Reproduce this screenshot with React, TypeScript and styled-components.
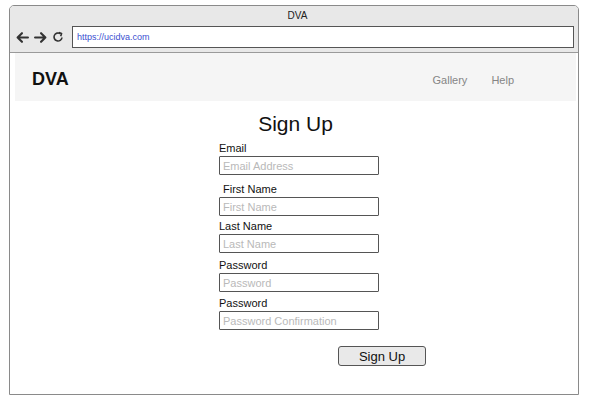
import React from "react";
import styled, { createGlobalStyle } from "styled-components";

const Global = createGlobalStyle`
  html, body { margin: 0; padding: 0; background: #ffffff; }
  body { font-family: "Liberation Sans", Arial, sans-serif; color: #111; }
`;

const Window = styled.div`
  box-sizing: border-box;
  margin: 5px 0 0 9px;
  width: 570px;
  height: 390px;
  border: 1px solid #8a8a8a;
  border-radius: 5px 5px 0 0;
  box-shadow: 0 1px 0 #b8b8b8;
  display: flex;
  flex-direction: column;
  overflow: hidden;
`;

const TitleBar = styled.div`
  background: #e8e8e8;
  height: 47px;
  border-bottom: 1px solid #9a9a9a;
  display: flex;
  flex-direction: column;
  box-sizing: border-box;
  padding: 4px 4px 0 6px;
`;

const Title = styled.div`
  text-align: center;
  font-size: 10px;
  line-height: 12px;
  color: #222;
  padding-left: 5px;
`;

const AddressRow = styled.div`
  display: flex;
  align-items: center;
  margin-top: 4px;
`;

const NavIcons = styled.div`
  display: flex;
  align-items: center;
  width: 56px;
  gap: 5px;
`;

const Address = styled.div`
  flex: 1;
  box-sizing: border-box;
  height: 22px;
  border: 1px solid #555;
  background: #fff;
  font-size: 9px;
  line-height: 20px;
  color: #3b4fd0;
  padding-left: 4px;
`;

const Content = styled.div`
  flex: 1;
  display: flex;
  flex-direction: column;
  padding: 0 2px 0 5px;
`;

const NavBar = styled.div`
  box-sizing: border-box;
  height: 48px;
  background: #f5f5f5;
  display: flex;
  align-items: center;
  padding: 5px 62px 0 17px;
`;

const Brand = styled.div`
  font-size: 18px;
  font-weight: bold;
  color: #111;
  flex: 1;
`;

const NavLinks = styled.div`
  display: flex;
  gap: 24px;
`;

const NavLink = styled.span`
  font-size: 11px;
  color: #858585;
`;

const Main = styled.div`
  display: flex;
  flex-direction: column;
`;

const Heading = styled.h1`
  margin: 11px 0 0 0;
  font-size: 21px;
  line-height: 24px;
  font-weight: normal;
  text-align: center;
  color: #111;
`;

const Form = styled.form`
  display: flex;
  flex-direction: column;
  width: 207px;
  margin: 5px 0 0 204px;
`;

const Field = styled.div<{ $space: number }>`
  display: flex;
  flex-direction: column;
  width: 160px;
  margin-top: ${(p) => p.$space}px;
`;

const Label = styled.label<{ $indent?: number }>`
  font-size: 11px;
  line-height: 14px;
  height: 14px;
  margin-bottom: 1px;
  padding-left: ${(p) => p.$indent ?? 0}px;
  color: #111;
`;

const Input = styled.input`
  box-sizing: border-box;
  width: 160px;
  height: 19px;
  border: 1px solid #555;
  border-radius: 1px;
  padding: 0 3px;
  margin: 0;
  font-family: "Liberation Sans", Arial, sans-serif;
  font-size: 11px;
  outline: none;
  background: #fff;
  &::placeholder { color: #b9b9b9; }
`;

const ButtonRow = styled.div`
  display: flex;
  justify-content: flex-end;
  margin-top: 16px;
`;

const Button = styled.button`
  box-sizing: border-box;
  width: 88px;
  height: 20px;
  border: 1px solid #555;
  border-radius: 3px;
  background: #e9e9e9;
  font-family: "Liberation Sans", Arial, sans-serif;
  font-size: 13px;
  color: #111;
  padding: 0;
`;

const Icon = ({ children }: { children: React.ReactNode }) => (
  <svg width="13" height="13" viewBox="0 0 12 12" fill="none" stroke="#333" strokeWidth="2" strokeLinecap="round" strokeLinejoin="round">
    {children}
  </svg>
);

const fields = [
  { label: "Email", ph: "Email Address", type: "email", indent: 0, space: 0 },
  { label: "First Name", ph: "First Name", type: "text", indent: 4, space: 7 },
  { label: "Last Name", ph: "Last Name", type: "text", indent: 0, space: 3 },
  { label: "Password", ph: "Password", type: "password", indent: 0, space: 5 },
  { label: "Password", ph: "Password Confirmation", type: "password", indent: 0, space: 4 },
];

export default function App() {
  return (
    <>
      <Global />
      <Window>
        <TitleBar>
          <Title>DVA</Title>
          <AddressRow>
            <NavIcons>
              <Icon>
                <path d="M11 6H1.5M5.5 2L1.5 6l4 4" />
              </Icon>
              <Icon>
                <path d="M1 6h9.5M6.5 2l4 4-4 4" />
              </Icon>
              <svg width="12" height="12" viewBox="0 0 12 12" fill="none" stroke="#333" strokeWidth="1.6">
                <path d="M10 6.5A4 4 0 1 1 8.3 2.7" />
                <path d="M6.8 1.4l2.8 1.1-0.9 2.7" strokeLinejoin="round" />
              </svg>
            </NavIcons>
            <Address>https://ucidva.com</Address>
          </AddressRow>
        </TitleBar>
        <Content>
          <NavBar>
            <Brand>DVA</Brand>
            <NavLinks>
              <NavLink>Gallery</NavLink>
              <NavLink>Help</NavLink>
            </NavLinks>
          </NavBar>
          <Main>
            <Heading>Sign Up</Heading>
            <Form onSubmit={(e) => e.preventDefault()}>
              {fields.map((f, i) => (
                <Field key={i} $space={f.space}>
                  <Label $indent={f.indent}>{f.label}</Label>
                  <Input type={f.type} placeholder={f.ph} />
                </Field>
              ))}
              <ButtonRow>
                <Button type="submit">Sign Up</Button>
              </ButtonRow>
            </Form>
          </Main>
        </Content>
      </Window>
    </>
  );
}
